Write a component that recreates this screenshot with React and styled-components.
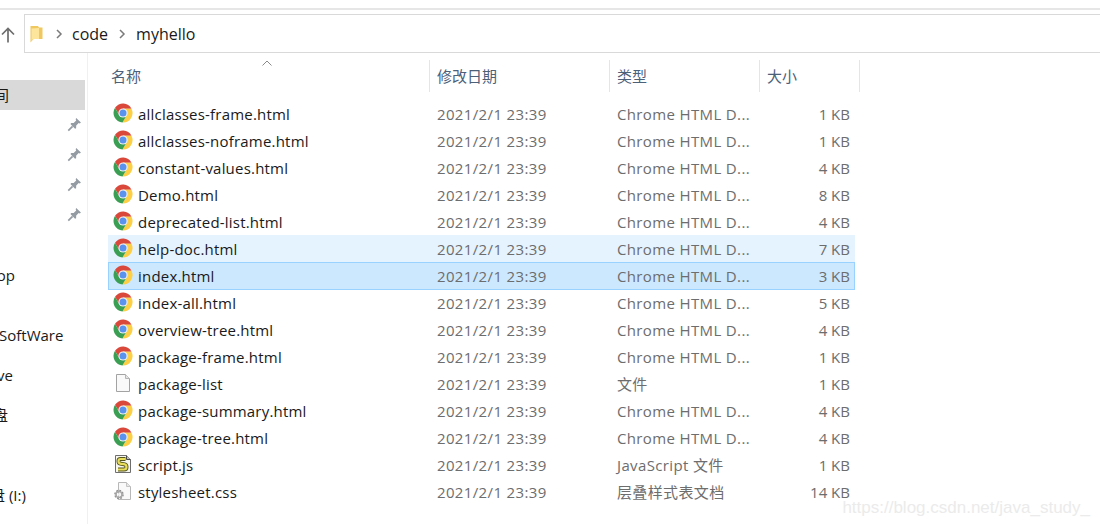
import React from 'react'
import styled, { createGlobalStyle } from 'styled-components'

const files = [
  { name: 'allclasses-frame.html', type: 'Chrome HTML D...', size: '1 KB', icon: 'chrome' },
  { name: 'allclasses-noframe.html', type: 'Chrome HTML D...', size: '1 KB', icon: 'chrome' },
  { name: 'constant-values.html', type: 'Chrome HTML D...', size: '4 KB', icon: 'chrome' },
  { name: 'Demo.html', type: 'Chrome HTML D...', size: '8 KB', icon: 'chrome' },
  { name: 'deprecated-list.html', type: 'Chrome HTML D...', size: '4 KB', icon: 'chrome' },
  { name: 'help-doc.html', type: 'Chrome HTML D...', size: '7 KB', icon: 'chrome', state: 'hover' },
  { name: 'index.html', type: 'Chrome HTML D...', size: '3 KB', icon: 'chrome', state: 'selected' },
  { name: 'index-all.html', type: 'Chrome HTML D...', size: '5 KB', icon: 'chrome' },
  { name: 'overview-tree.html', type: 'Chrome HTML D...', size: '4 KB', icon: 'chrome' },
  { name: 'package-frame.html', type: 'Chrome HTML D...', size: '1 KB', icon: 'chrome' },
  { name: 'package-list', type: '文件', size: '1 KB', icon: 'page' },
  { name: 'package-summary.html', type: 'Chrome HTML D...', size: '4 KB', icon: 'chrome' },
  { name: 'package-tree.html', type: 'Chrome HTML D...', size: '4 KB', icon: 'chrome' },
  { name: 'script.js', type: 'JavaScript 文件', size: '1 KB', icon: 'script' },
  { name: 'stylesheet.css', type: '层叠样式表文档', size: '14 KB', icon: 'css' },
]

function ChromeIcon() {
  return (
    <svg width="20" height="20" viewBox="0 0 20 20">
      <path fill="#d9483b" d="M18.47 5.7L10 5.7L6.28 12.15L2.04 4.82A9.5 9.5 0 0 1 18.47 5.7Z" />
      <path fill="#fdcf45" d="M18.47 5.7A9.5 9.5 0 0 1 9.49 19.49L13.72 12.15L10 5.7Z" />
      <path fill="#3b9f53" d="M9.49 19.49A9.5 9.5 0 0 1 2.04 4.82L6.28 12.15L13.72 12.15Z" />
      <circle cx="10" cy="10" r="4.6" fill="#f4f4f4" />
      <circle cx="10" cy="10" r="3.5" fill="#5a93ee" />
    </svg>
  )
}

function PageIcon() {
  return (
    <svg width="20" height="20" viewBox="0 0 20 20">
      <path fill="#f9f9f9" stroke="#a3a3a3" d="M3.5 1.5H12.5L16.5 5.5V18.5H3.5Z" />
      <path fill="#e4e4e4" stroke="#b5b5b5" d="M12.5 1.5V5.5H16.5" />
    </svg>
  )
}

function ScriptIcon() {
  return (
    <svg width="20" height="20" viewBox="0 0 20 20">
      <path fill="#f7f7f0" stroke="#6e6e6e" d="M2.5 1.5H13.5L17.5 5.5V18.5H2.5Z" />
      <path fill="#bdbdbd" stroke="#4c4c4c" d="M13.5 1.5V5.5H17.5" />
      <path fill="none" stroke="#55551c" strokeWidth="4" d="M12.5 5H7.5Q5.5 5 5.5 7.2Q5.5 9.5 8 9.8L11 10.2Q13.5 10.6 13.5 13Q13.5 15.5 11 15.5H5" />
      <path fill="none" stroke="#e9dd5c" strokeWidth="2.2" d="M12.5 5H7.5Q5.5 5 5.5 7.2Q5.5 9.5 8 9.8L11 10.2Q13.5 10.6 13.5 13Q13.5 15.5 11 15.5H5" />
    </svg>
  )
}

function CssIcon() {
  return (
    <svg width="20" height="20" viewBox="0 0 20 20">
      <path fill="#f9f9f9" stroke="#b8b8b8" d="M5.5 1.5H13.5L17.5 5.5V18.5H5.5Z" />
      <path fill="#e6e6e6" stroke="#c4c4c4" d="M13.5 1.5V5.5H17.5" />
      <circle cx="6" cy="13.5" r="3.6" fill="none" stroke="#8d8d8d" strokeWidth="2.4" strokeDasharray="1.6 1.2" />
      <circle cx="6" cy="13.5" r="3" fill="none" stroke="#a9a9a9" strokeWidth="1.6" />
      <circle cx="6" cy="13.5" r="1.2" fill="#efefef" />
    </svg>
  )
}

const icons = { chrome: ChromeIcon, page: PageIcon, script: ScriptIcon, css: CssIcon }

function PinIcon() {
  return (
    <svg width="15" height="15" viewBox="0 0 14 14">
      <path fill="#949ba3" d="M8.6 1L13 5.2L11.9 6L10.9 5.7L8.6 8L8.5 10.4L7.5 11L3.2 6.6L4 5.6L6.2 5.5L8.6 3.2L8.1 2Z" />
      <path stroke="#949ba3" strokeWidth="1.6" d="M5.2 8.8L1.2 12.8" />
    </svg>
  )
}

function FolderIcon() {
  return (
    <svg width="13" height="18" viewBox="0 0 13 18">
      <path fill="#f0c860" d="M0.5 1H8L9 2.5H12.5V14H3.5L0.5 17.5Z" />
      <path fill="#fde69c" d="M1.5 3.5L9 3V14H3L1.5 16Z" />
    </svg>
  )
}

function Chevron() {
  return (
    <svg width="8" height="10" viewBox="0 0 8 10">
      <path fill="none" stroke="#7a7a7a" strokeWidth="1.5" d="M2 1L6 5L2 9" />
    </svg>
  )
}

function App() {
  return (
    <Window>
      <GlobalStyle />
      <TopRule />
      <AddressRow>
        <UpButton>
          <svg width="14" height="16" viewBox="0 0 14 16">
            <path fill="none" stroke="#6d6d6d" strokeWidth="1.7" d="M7 15.5V1.5M1 7.5L7 1.5L13 7.5" />
          </svg>
        </UpButton>
        <AddressBar>
          <FolderIcon />
          <CrumbArrow $first><Chevron /></CrumbArrow>
          <Crumb>code</Crumb>
          <CrumbArrow><Chevron /></CrumbArrow>
          <Crumb>myhello</Crumb>
        </AddressBar>
      </AddressRow>
      <Main>
        <Sidebar>
          <NavItem $selected $clip={-21} $top={27}>时间</NavItem>
          <NavItem><PinSlot><PinIcon /></PinSlot></NavItem>
          <NavItem><PinSlot><PinIcon /></PinSlot></NavItem>
          <NavItem><PinSlot><PinIcon /></PinSlot></NavItem>
          <NavItem><PinSlot><PinIcon /></PinSlot></NavItem>
          <NavItem $clip={-43} $top={30}>Desktop</NavItem>
          <NavItem $clip={-1} $top={30}>SoftWare</NavItem>
          <NavItem $clip={-53} $top={10}>OneDrive</NavItem>
          <NavItem $clip={-52} $top={10}>本地磁盘</NavItem>
          <NavItem $clip={-55} $top={50}>本地磁盘 (I:)</NavItem>
        </Sidebar>
        <FileList>
          <SortMark>
            <svg width="10" height="6" viewBox="0 0 10 6">
              <path fill="none" stroke="#8a8a8a" d="M0.5 5.5L5 1L9.5 5.5" />
            </svg>
          </SortMark>
          <HeaderRow>
            <HeaderCell $width={322} $first>名称</HeaderCell>
            <HeaderCell $width={180}>修改日期</HeaderCell>
            <HeaderCell $width={150}>类型</HeaderCell>
            <HeaderCell $width={100}>大小</HeaderCell>
          </HeaderRow>
          {files.map((file) => {
            const Icon = icons[file.icon]
            return (
              <FileRow key={file.name} $state={file.state}>
                <IconSlot><Icon /></IconSlot>
                <FileName>{file.name}</FileName>
                <FileMeta>2021/2/1 23:39</FileMeta>
                <FileMeta>{file.type}</FileMeta>
                <FileSize>{file.size}</FileSize>
              </FileRow>
            )
          })}
        </FileList>
      </Main>
      <Watermark>https://blog.csdn.net/java_study_</Watermark>
    </Window>
  )
}

export default App

const GlobalStyle = createGlobalStyle`
  html, body {
    margin: 0;
    padding: 0;
    background: #fff;
    overflow: hidden;
  }
`

const Window = styled.div`
  position: relative;
  width: 1100px;
  height: 524px;
  overflow: hidden;
  background: #fff;
  padding-top: 8px;
  box-sizing: border-box;
  font-family: "Open Sans", "Noto Sans CJK SC", sans-serif;
  font-size: 15px;
  color: #1a1a1a;
`

const TopRule = styled.div`
  height: 2px;
  background: #e6e6e6;
`

const AddressRow = styled.div`
  display: flex;
  height: 39px;
  margin-top: 4px;
`

const UpButton = styled.div`
  width: 24px;
  flex: none;
  display: flex;
  align-items: center;
  padding: 3px 0 0 1px;
  box-sizing: border-box;
`

const AddressBar = styled.div`
  flex: 1;
  display: flex;
  align-items: center;
  margin-right: -2px;
  padding-left: 5px;
  border: 1px solid #d9d9d9;
  font-size: 16px;
`

const CrumbArrow = styled.span`
  display: flex;
  margin: 0 ${(p) => (p.$first ? '9px' : '10px')} 0 ${(p) => (p.$first ? '12px' : '10px')};
`

const Crumb = styled.span`
  line-height: 20px;
`

const Main = styled.div`
  display: flex;
  height: 471px;
`

const Sidebar = styled.div`
  width: 87px;
  flex: none;
  border-right: 1px solid #f0f0f0;
  padding-top: 27px;
  overflow: hidden;
`

const NavItem = styled.div`
  position: relative;
  width: 85px;
  height: 30px;
  line-height: 30px;
  white-space: nowrap;
  overflow: hidden;
  text-indent: ${(p) => p.$clip || 0}px;
  margin-top: ${(p) => (p.$selected ? 0 : p.$top || 0)}px;
  background: ${(p) => (p.$selected ? '#d9d9d9' : 'transparent')};
`

const PinSlot = styled.span`
  position: absolute;
  right: 3px;
  top: 7px;
  display: flex;
`

const FileList = styled.div`
  position: relative;
  padding: 7px 0 0 20px;
`

const SortMark = styled.div`
  position: absolute;
  left: 174px;
  top: 7px;
  display: flex;
`

const HeaderRow = styled.div`
  display: flex;
  height: 32px;
  margin-bottom: 8px;
`

const HeaderCell = styled.div`
  width: ${(p) => p.$width}px;
  box-sizing: border-box;
  padding-left: ${(p) => (p.$first ? 3 : 7)}px;
  border-right: 1px solid #e5e5e5;
  line-height: 32px;
  color: #4c607a;
`

const FileRow = styled.div`
  display: grid;
  grid-template-columns: 25px 296px 180px 150px 94px;
  width: 747px;
  height: ${(p) => (p.$state === 'selected' ? 28 : 27)}px;
  margin-bottom: ${(p) => (p.$state === 'selected' ? -1 : 0)}px;
  box-sizing: border-box;
  align-items: center;
  border: 1px solid ${(p) => (p.$state === 'selected' ? '#99d1ff' : 'transparent')};
  background: ${(p) =>
    p.$state === 'selected' ? '#cce8ff' : p.$state === 'hover' ? '#e5f3ff' : 'transparent'};
`

const IconSlot = styled.span`
  display: flex;
  padding-left: 4px;
  margin-top: -2px;
`

const FileName = styled.span`
  padding-left: 4px;
  white-space: nowrap;
  letter-spacing: 0.2px;
`

const FileMeta = styled.span`
  padding-left: 7px;
  color: #6d6d6d;
  white-space: nowrap;
  letter-spacing: 0.36px;
`

const FileSize = styled.span`
  padding-right: 4px;
  text-align: right;
  color: #6d6d6d;
`

const Watermark = styled.div`
  position: absolute;
  right: 10px;
  bottom: 6px;
  font-family: "Liberation Sans", sans-serif;
  font-size: 17px;
  color: #ebebeb;
`
